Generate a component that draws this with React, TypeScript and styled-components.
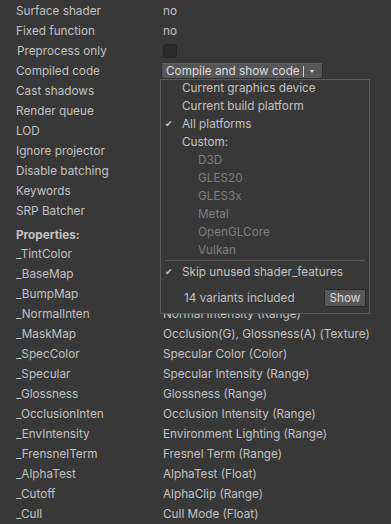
import React from "react";
import styled, { createGlobalStyle } from "styled-components";

const Global = createGlobalStyle`
  html, body { margin: 0; padding: 0; background: #383838; }
  body { font-family: Inter, "Noto Sans", sans-serif; font-size: 11.75px; color: #c2c2c2; }
`;

const Page = styled.div`
  position: relative;
  width: 391px;
  height: 524px;
  box-sizing: border-box;
  padding-top: 1px;
  overflow: hidden;
  background: #383838;
`;

const Section = styled.div`
  display: flex;
  flex-direction: column;
`;

const Row = styled.div`
  display: grid;
  grid-template-columns: 147px 1fr;
  align-items: center;
  height: 20px;
  padding-left: 16px;
  white-space: nowrap;
`;

const Label = styled.span<{ $indent?: number }>`
  padding-left: ${(p) => p.$indent ?? 0}px;
`;

const Value = styled.span`
  display: flex;
  align-items: center;
`;

const Header = styled.div`
  height: 19px;
  margin-top: 4px;
  padding-left: 16px;
  display: flex;
  align-items: center;
  font-weight: 700;
`;

const Checkbox = styled.span`
  width: 14px;
  height: 14px;
  box-sizing: border-box;
  background: #2a2a2a;
  border: 1px solid #222;
  border-radius: 3px;
`;

const DropButton = styled.div`
  margin-left: -2px;
  width: 162px;
  height: 16px;
  box-sizing: border-box;
  display: flex;
  align-items: center;
  background: #565656;
  border: 1px solid #2e2e2e;
  border-top-color: #606060;
  border-radius: 3px;
  padding-left: 4px;
  color: #dcdcdc;
`;

const DropText = styled.span`
  flex: 1;
`;

const DropBar = styled.span`
  width: 1px;
  height: 11px;
  background: #d0d0d0;
  margin-right: 6px;
`;

const Arrow = styled.span`
  width: 0;
  height: 0;
  border-left: 2px solid transparent;
  border-right: 2px solid transparent;
  border-top: 3px solid #d0d0d0;
  margin-right: 8px;
`;

const Menu = styled.div`
  position: absolute;
  left: 160px;
  top: 79px;
  width: 210px;
  height: 235px;
  box-sizing: border-box;
  background: #383838;
  border: 1px solid #5c5c5c;
  display: flex;
  flex-direction: column;
`;

const Item = styled.div<{ $disabled?: boolean }>`
  height: 18px;
  display: grid;
  grid-template-columns: 21px 1fr;
  line-height: 16px;
  color: ${(p) => (p.$disabled ? "#7e7e7e" : "#c2c2c2")};
  white-space: nowrap;
`;

const Check = styled.span`
  font-family: "DejaVu Sans", sans-serif;
  font-size: 9px;
  padding-left: 4px;
  color: #c8c8c8;
`;

const ItemText = styled.span<{ $indent?: number }>`
  padding-left: ${(p) => p.$indent ?? 0}px;
`;

const Separator = styled.div`
  height: 1px;
  background: #565656;
  margin: 0 4px 3px 4px;
`;

const Footer = styled.div`
  margin-top: 7px;
  height: 18px;
  display: flex;
  align-items: center;
  justify-content: space-between;
  padding-left: 23px;
  padding-right: 3px;
`;

const ShowButton = styled.div`
  width: 42px;
  height: 18px;
  box-sizing: border-box;
  background: #585858;
  border: 1px solid #2a2a2a;
  border-radius: 2px;
  display: flex;
  align-items: center;
  justify-content: center;
  color: #dedede;
`;

const topRows: [string, string, number?][] = [
  ["Surface shader", "no"],
  ["Fixed function", "no"],
  ["Preprocess only", "checkbox", 1],
  ["Compiled code", "dropdown"],
  ["Cast shadows", ""],
  ["Render queue", ""],
  ["LOD", ""],
  ["Ignore projector", ""],
  ["Disable batching", ""],
  ["Keywords", ""],
  ["SRP Batcher", ""],
];

const props: [string, string][] = [
  ["_TintColor", ""],
  ["_BaseMap", ""],
  ["_BumpMap", ""],
  ["_NormalInten", "Normal Intensity (Range)"],
  ["_MaskMap", "Occlusion(G), Glossness(A) (Texture)"],
  ["_SpecColor", "Specular Color (Color)"],
  ["_Specular", "Specular Intensity (Range)"],
  ["_Glossness", "Glossness (Range)"],
  ["_OcclusionInten", "Occlusion Intensity (Range)"],
  ["_EnvIntensity", "Environment Lighting (Range)"],
  ["_FrensnelTerm", "Fresnel Term (Range)"],
  ["_AlphaTest", "AlphaTest (Float)"],
  ["_Cutoff", "AlphaClip (Range)"],
  ["_Cull", "Cull Mode (Float)"],
];

const menuItems: { text: string; checked?: boolean; disabled?: boolean; indent?: number }[] = [
  { text: "Current graphics device" },
  { text: "Current build platform" },
  { text: "All platforms", checked: true },
  { text: "Custom:" },
  { text: "D3D", disabled: true, indent: 16 },
  { text: "GLES20", disabled: true, indent: 16 },
  { text: "GLES3x", disabled: true, indent: 16 },
  { text: "Metal", disabled: true, indent: 16 },
  { text: "OpenGLCore", disabled: true, indent: 16 },
  { text: "Vulkan", disabled: true, indent: 16 },
];

export default function App() {
  const renderValue = (v: string) => {
    if (v === "checkbox") return <Checkbox />;
    if (v === "dropdown")
      return (
        <DropButton>
          <DropText>Compile and show code</DropText>
          <DropBar />
          <Arrow />
        </DropButton>
      );
    return v;
  };

  return (
    <Page>
      <Global />
      <Section>
        {topRows.map(([label, v, indent]) => (
          <Row key={label}>
            <Label $indent={indent}>{label}</Label>
            <Value>{renderValue(v)}</Value>
          </Row>
        ))}
      </Section>
      <Header>Properties:</Header>
      <Section>
        {props.map(([name, desc]) => (
          <Row key={name}>
            <Label>{name}</Label>
            <Value>{desc}</Value>
          </Row>
        ))}
      </Section>
      <Menu>
        {menuItems.map((m) => (
          <Item key={m.text} $disabled={m.disabled}>
            <Check>{m.checked ? "✔" : ""}</Check>
            <ItemText $indent={m.indent}>{m.text}</ItemText>
          </Item>
        ))}
        <Separator />
        <Item>
          <Check>✔</Check>
          <ItemText>Skip unused shader_features</ItemText>
        </Item>
        <Footer>
          <span>14 variants included</span>
          <ShowButton>Show</ShowButton>
        </Footer>
      </Menu>
    </Page>
  );
}
